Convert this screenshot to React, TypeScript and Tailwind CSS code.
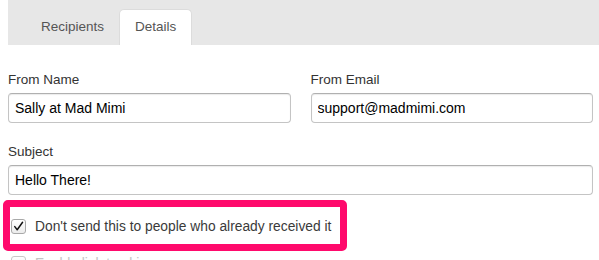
import { useState } from "react";

function Check({ checked, muted }: { checked: boolean; muted?: boolean }) {
  return (
    <span
      className={`flex h-[15px] w-[15px] shrink-0 items-center justify-center rounded-[3px] border bg-gradient-to-b from-white to-[#ececec] ${
        muted ? "border-[#c8c8c8]" : "border-[#a9a9a9]"
      }`}
    >
      {checked && (
        <svg viewBox="0 0 15 15" className="h-[15px] w-[15px]">
          <path d="M3.2 7.6 L6 11.2 L12.2 2.6" fill="none" stroke="#111" strokeWidth="1.7" strokeLinecap="round" strokeLinejoin="round" />
        </svg>
      )}
    </span>
  );
}

function Field({ label, value, onChange }: { label: string; value: string; onChange: (v: string) => void }) {
  return (
    <div className="flex flex-col">
      <label className="mb-[4px] h-[18px] text-[13.5px] leading-[18px] text-[#333]">{label}</label>
      <input
        value={value}
        onChange={(e) => onChange(e.target.value)}
        className="h-[30px] w-full rounded-[4px] border border-[#c4c4c4] border-t-[#b0b0b0] bg-white px-[6px] text-[14px] text-black shadow-[inset_0_1px_1px_rgba(0,0,0,0.08)] outline-none"
      />
    </div>
  );
}

export default function App() {
  const [tab, setTab] = useState("Details");
  const [fromName, setFromName] = useState("Sally at Mad Mimi");
  const [fromEmail, setFromEmail] = useState("support@madmimi.com");
  const [subject, setSubject] = useState("Hello There!");
  const [skipReceived, setSkipReceived] = useState(true);

  return (
    <div className="h-[260px] w-[599px] overflow-hidden bg-white font-['Liberation_Sans',Arial,sans-serif]">
      {/* Tabs */}
      <div className="ml-[8px] flex h-[45px] items-end bg-[#e7e7e7] pl-[18px]">
        {["Recipients", "Details"].map((t) => (
          <button
            key={t}
            onClick={() => setTab(t)}
            className={`h-[36px] px-[15px] text-[13.5px] text-[#555] ${
              tab === t ? "rounded-t-[5px] border border-b-0 border-[#dcdcdc] bg-white" : ""
            }`}
          >
            {t}
          </button>
        ))}
      </div>

      {/* Form */}
      <div className="pl-[8px] pr-[6px] pt-[26px]">
        <div className="grid grid-cols-2 gap-x-[20px]">
          <Field label="From Name" value={fromName} onChange={setFromName} />
          <Field label="From Email" value={fromEmail} onChange={setFromEmail} />
        </div>
        <div className="mt-[20px]">
          <Field label="Subject" value={subject} onChange={setSubject} />
        </div>

        <div className="ml-[-5px] mt-[5px] w-[344px] rounded-[5px] border-[7px] border-[#ff0a6c] pb-[10px] pl-[1px] pt-[12px]">
          <label className="flex cursor-pointer items-center gap-[9px]" onClick={() => setSkipReceived(!skipReceived)}>
            <Check checked={skipReceived} />
            <span className="text-[13.8px] leading-[15px] text-[#3a3a3a]">Don't send this to people who already received it</span>
          </label>
        </div>

        <div className="mt-[5px] flex items-center gap-[9px] pl-[3px]">
          <Check checked={false} muted />
          <span className="text-[13.8px] leading-[15px] text-[#c4c4c4]">Enable link tracking</span>
        </div>
      </div>
    </div>
  );
}
